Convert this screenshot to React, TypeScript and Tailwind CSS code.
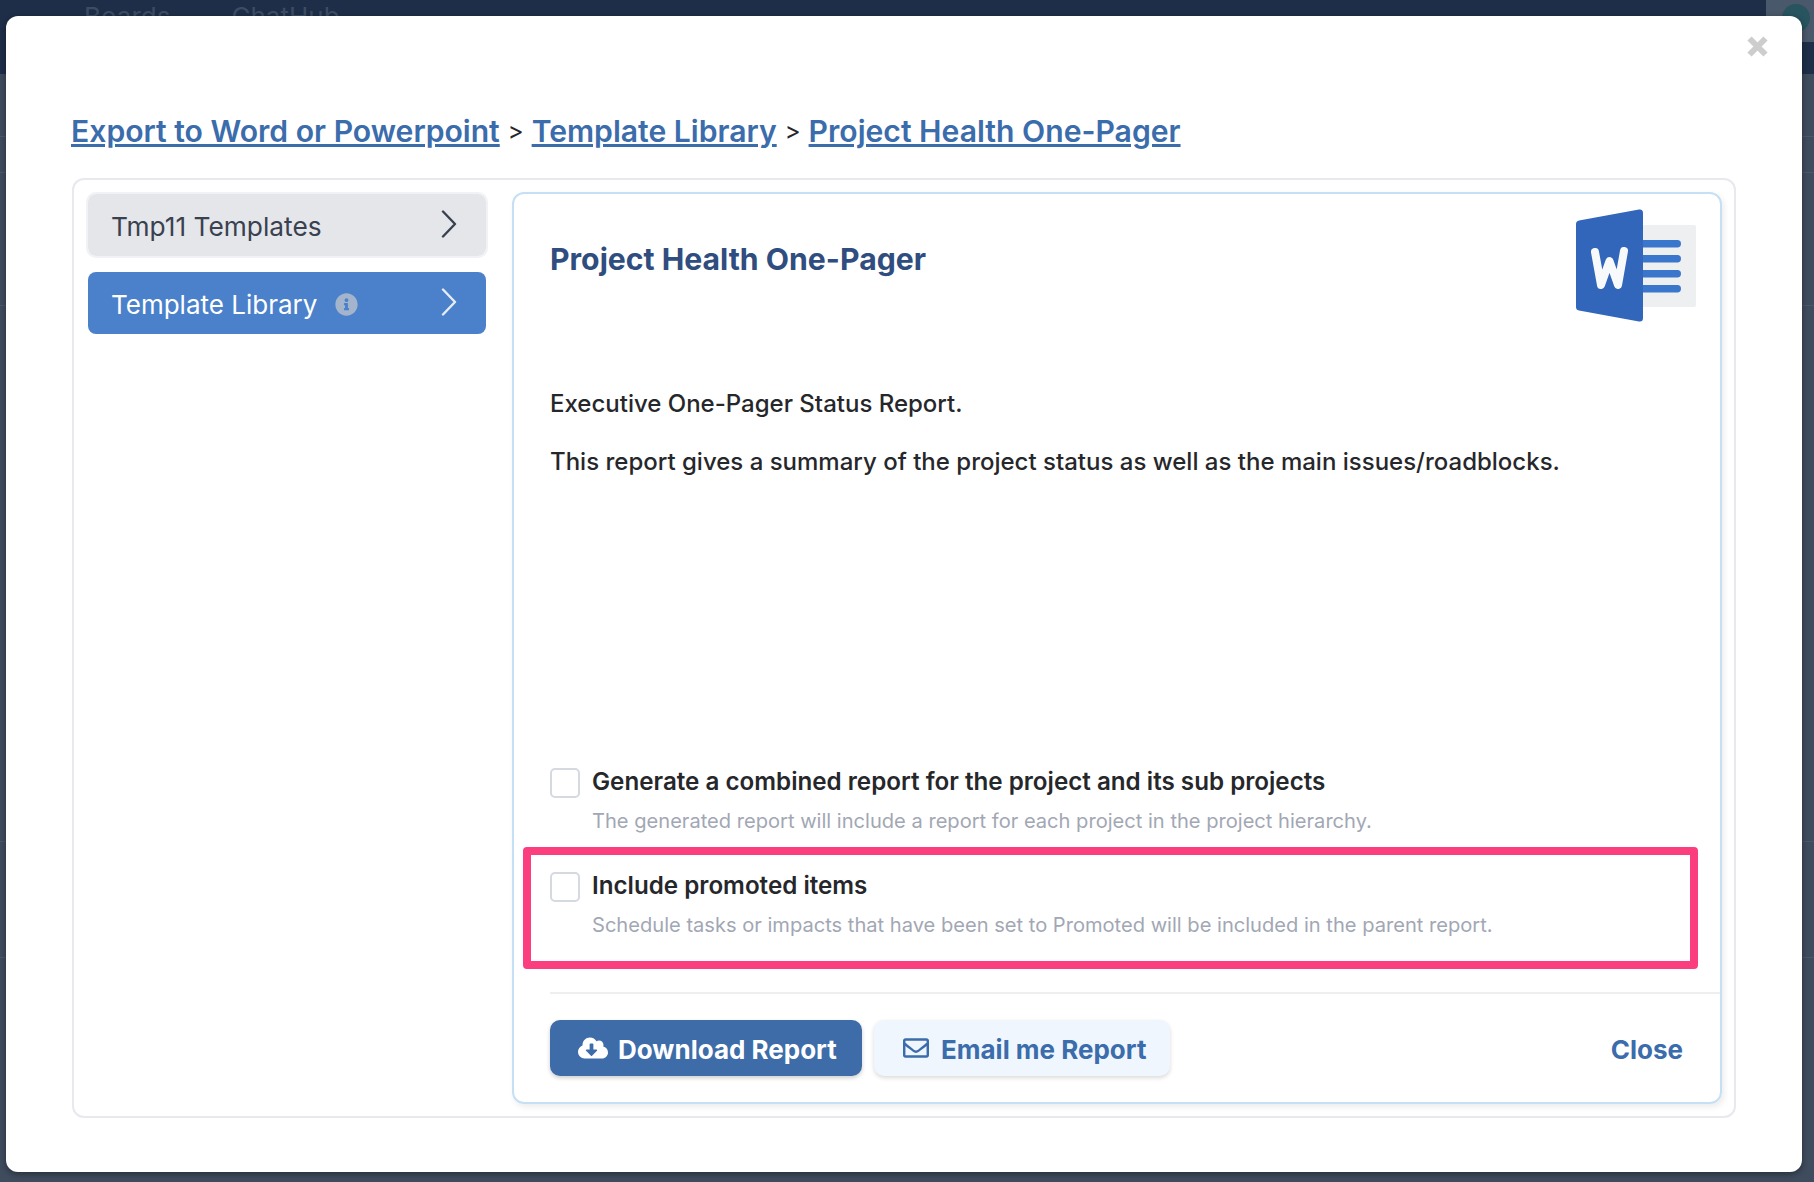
import { FaCloudDownloadAlt, FaInfoCircle, FaRegEnvelope } from "react-icons/fa";

function Chevron({ className }: { className: string }) {
  return (
    <svg width="16" height="28" viewBox="0 0 16 28" fill="none" className={className}>
      <polyline points="2,1.5 14,14 2,26.5" stroke="currentColor" strokeWidth="2.4" strokeLinecap="round" strokeLinejoin="round" />
    </svg>
  );
}

function WordIcon() {
  return (
    <svg width="120" height="113" viewBox="0 0 120 113" fill="none">
      <rect x="60" y="16" width="60" height="82" rx="2" fill="#eeeff1" />
      <rect x="60" y="31" width="45" height="7.5" rx="3.7" fill="#3a76cc" />
      <rect x="60" y="46" width="45" height="7.5" rx="3.7" fill="#3a76cc" />
      <rect x="60" y="61" width="45" height="7.5" rx="3.7" fill="#3a76cc" />
      <rect x="60" y="76" width="45" height="7.5" rx="3.7" fill="#3a76cc" />
      <path d="M3 11.5 L63 0.5 Q67 0 67 4 L67 109 Q67 113 63 112.5 L3 101.5 Q0 101 0 98 L0 15 Q0 12 3 11.5 Z" fill="#3166ba" />
      <polyline points="19,43 25,76 33.5,52 42,76 48,42" stroke="#f8f9fb" strokeWidth="8" strokeLinecap="round" strokeLinejoin="round" />
    </svg>
  );
}

function CheckRow({ title, hint }: { title: string; hint: string }) {
  return (
    <div className="flex gap-3">
      <div className="mt-[3px] h-[30px] w-[30px] shrink-0 rounded-[5px] border-2 border-[#d5d9e0] bg-white"></div>
      <div>
        <p className="pt-px text-[24.2px] leading-[32px] font-semibold text-[#26272b]">{title}</p>
        <p className="mt-[8px] text-[20.1px] leading-[30px] text-[#a2a7b4]">{hint}</p>
      </div>
    </div>
  );
}

export default function App() {
  return (
    <div className="relative h-[1182px] w-full overflow-hidden bg-[#3f4c5e] font-['Inter',sans-serif]">
      {/* page behind the dialog */}
      <div className="flex h-[74px] items-start gap-[61px] bg-[#1e2e48] pl-[84px] text-[26px] leading-[34px] text-[#3d4c63]">
        <span>Boards</span>
        <span>ChatHub</span>
      </div>
      <div className="h-[63px] border-b border-[#4b5868]"></div>
      <div className="h-[36px] border-b border-[#4b5868]"></div>
      <div className="h-[133px] border-b border-[#4b5868]"></div>
      <div className="h-[536px] border-b border-[#4b5868]"></div>
      <div className="h-[116px] border-b border-[#4b5868]"></div>
      <div className="absolute right-0 top-0 flex h-[42px] w-[48px] items-start justify-end bg-[#4a586b] pr-[4px] pt-[4px]">
        <div className="h-[28px] w-[28px] rounded-full bg-[#27545f]"></div>
      </div>

      <div className="absolute left-[6px] top-[16px] flex h-[1156px] w-[1796px] flex-col rounded-[12px] bg-white pl-[66px] pr-[66px] shadow-[0_2px_6px_rgba(0,0,0,0.4)]">
        <button className="absolute right-[34px] top-[20px]">
          <svg width="21" height="21" viewBox="0 0 21 21" className="block">
            <path d="M2.5 2.5 L18.5 18.5 M18.5 2.5 L2.5 18.5" stroke="#cdcdcd" strokeWidth="6" />
          </svg>
        </button>

        <div className="-ml-px mt-[94px] flex h-[42px] items-center text-[30.13px] leading-[42px] font-semibold text-[#3b6cab]">
          <a className="underline">Export to Word or Powerpoint</a>
          <span className="mx-[8px] text-[24px] font-normal text-[#26272b]">&gt;</span>
          <a className="underline">Template Library</a>
          <span className="ml-[8px] mr-[8px] text-[24px] font-normal text-[#26272b]">&gt;</span>
          <a className="underline">Project Health One-Pager</a>
        </div>

        <div className="mt-[26px] flex h-[940px] w-[1664px] gap-[26px] rounded-[12px] border-2 border-[#e8e8ee] px-[14px] pt-[12px]">
          <div className="mt-[2px] flex w-[398px] shrink-0 flex-col gap-[16px]">
            <div className="flex h-[62px] items-center justify-between rounded-[8px] bg-[#e5e6ea] pl-[23px] pr-[29px] text-[26.3px] text-[#394150] outline outline-2 outline-[#f1f2f5]">
              <span className="pt-[4px]">Tmp11 Templates</span>
              <Chevron className="-mt-[2px] text-[#394150]" />
            </div>
            <div className="flex h-[62px] items-center justify-between rounded-[8px] bg-[#4a81ca] pl-[23px] pr-[29px] text-[26px] text-white">
              <span className="flex items-center gap-[18px] pt-[3px]">
                Template Library
                <FaInfoCircle className="text-[23px] text-[#a3b4cc]" />
              </span>
              <Chevron className="-mt-[2px] text-[#e6edf7]" />
            </div>
          </div>

          <div className="flex h-[912px] w-[1210px] shrink-0 flex-col rounded-[12px] border-2 border-[#c5e0f5] pl-[36px] shadow-[2px_3px_6px_rgba(0,0,0,0.08)]">
            <div className="flex items-start justify-between pr-[24px] pt-[15px]">
              <h2 className="mt-[30px] text-[30.2px] leading-[40px] font-bold text-[#2f4d7e]">Project Health One-Pager</h2>
              <WordIcon />
            </div>
            <p className="mt-[65px] text-[24px] leading-[34px] font-medium text-[#26272b]">Executive One-Pager Status Report.</p>
            <p className="mt-[24px] text-[24px] leading-[34px] font-medium text-[#26272b]">
              This report gives a summary of the project status as well as the main issues/roadblocks.
            </p>

            <div className="mt-[286px]">
              <CheckRow
                title="Generate a combined report for the project and its sub projects"
                hint="The generated report will include a report for each project in the project hierarchy."
              />
            </div>
            <div className="relative mt-[33px]">
              <CheckRow
                title="Include promoted items"
                hint="Schedule tasks or impacts that have been set to Promoted will be included in the parent report."
              />
              <div className="absolute -left-[27px] -top-[22px] h-[122px] w-[1175px] rounded-[4px] border-[8px] border-[#fb3f7e]"></div>
            </div>

            <div className="mt-[52px] border-t-2 border-[#eeeff1]"></div>
            <div className="mt-[26px] flex items-center pr-[37px]">
              <button className="flex h-[56px] w-[312px] items-center gap-[10px] rounded-[10px] bg-[#3d6ca9] pl-[28px] text-[26px] font-bold text-white shadow-[0_2px_4px_rgba(0,0,0,0.2)]">
                <FaCloudDownloadAlt className="text-[30px]" />
                <span className="pt-[2px]">Download Report</span>
              </button>
              <button className="ml-[12px] flex h-[56px] w-[296px] items-center gap-[12px] rounded-[10px] bg-[#eff6fd] pl-[29px] text-[26px] font-bold text-[#3b6cab] shadow-[0_2px_4px_rgba(0,0,0,0.15)]">
                <FaRegEnvelope className="text-[26px]" />
                <span className="pt-[2px]">Email me Report</span>
              </button>
              <span className="ml-auto pt-[2px] text-[26px] font-bold text-[#3b6cab]">Close</span>
            </div>
          </div>
        </div>
      </div>
    </div>
  );
}
